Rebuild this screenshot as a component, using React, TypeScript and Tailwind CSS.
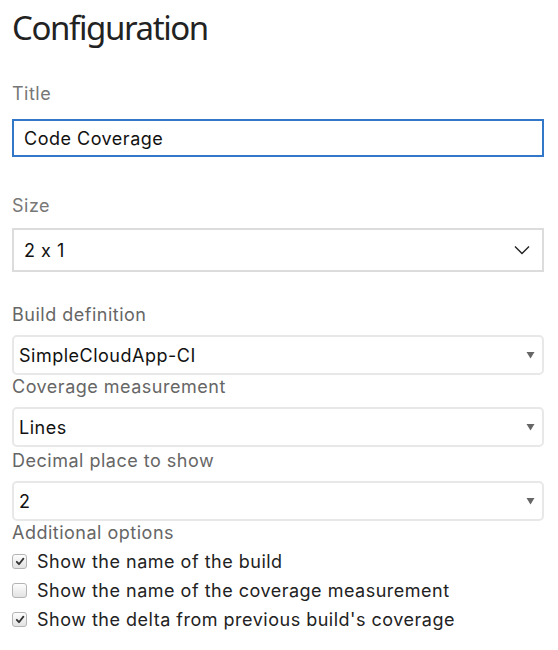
import React from "react";

function Label({ children, className = "" }: { children: React.ReactNode; className?: string }) {
  return <div className={"text-[18px] leading-[24px] tracking-[0.5px] " + className}>{children}</div>;
}

function NativeSelect({ value }: { value: string }) {
  return (
    <div className="flex items-center justify-between h-[40px] rounded-[5px] border-2 border-[#e8e8e8] bg-white pl-[5px] pr-[7px] text-[18px] tracking-[0.5px] text-[#111]">
      <span>{value}</span>
      <svg width="9" height="8" viewBox="0 0 9 8">
        <path d="M0.5 1 H8.5 L4.5 7.5 Z" fill="#666" />
      </svg>
    </div>
  );
}

function Check({ checked, label }: { checked: boolean; label: string }) {
  return (
    <div className="flex items-center h-[29px]">
      <span className="flex items-center justify-center w-[15px] h-[15px] rounded-[3px] border border-[#b4b4b4] bg-gradient-to-b from-[#fdfdfd] to-[#e2e2e2] mr-[10px]">
        {checked && (
          <svg width="10" height="9" viewBox="0 0 10 9">
            <path d="M1.8 4.8 L4 7.2 L8.4 1.6" stroke="#333" strokeWidth="1.8" fill="none" strokeLinecap="round" strokeLinejoin="round" />
          </svg>
        )}
      </span>
      <span className="text-[18px] tracking-[0.5px] text-[#222]">{label}</span>
    </div>
  );
}

export default function App() {
  return (
    <div
      className="w-[558px] h-[650px] bg-white pl-[12px] pr-[14px] [font-feature-settings:'calt'_0]"
      style={{ fontFamily: "Inter, 'Noto Sans', sans-serif" }}
    >
      <h1
        className="text-[33px] leading-[40px] pt-[8px] tracking-[-1.4px] text-[#222]"
        style={{ fontFamily: "'Noto Sans', sans-serif" }}
      >
        Configuration
      </h1>
      <Label className="mt-[34px] text-[#777]">Title</Label>
      <div className="mt-[13px] h-[38px] border-2 border-[#3277c8] flex items-center pl-[10px] text-[18px] tracking-[0.5px] text-[#111]">
        Code Coverage
      </div>
      <Label className="mt-[37px] text-[#777]">Size</Label>
      <div className="mt-[10px] h-[44px] border-2 border-[#dcdcdc] flex items-center justify-between pl-[10px] pr-[12px] text-[18px] tracking-[0.5px] text-[#111]">
        <span>2 x 1</span>
        <svg width="16" height="10" viewBox="0 0 16 10">
          <path d="M1 1.5 L8 8.5 L15 1.5" stroke="#222" strokeWidth="1.4" fill="none" />
        </svg>
      </div>
      <Label className="mt-[31px] text-[#666]">Build definition</Label>
      <div className="mt-[8px]">
        <NativeSelect value="SimpleCloudApp-CI" />
      </div>
      <Label className="mt-[0px] text-[#666]">Coverage measurement</Label>
      <div className="mt-[8px]">
        <NativeSelect value="Lines" />
      </div>
      <Label className="mt-[2px] text-[#666]">Decimal place to show</Label>
      <div className="mt-[8px]">
        <NativeSelect value="2" />
      </div>
      <Label className="mt-[0px] text-[#666]">Additional options</Label>
      <div className="mt-[2px]">
        <Check checked label="Show the name of the build" />
        <Check checked={false} label="Show the name of the coverage measurement" />
        <Check checked label="Show the delta from previous build's coverage" />
      </div>
    </div>
  );
}
